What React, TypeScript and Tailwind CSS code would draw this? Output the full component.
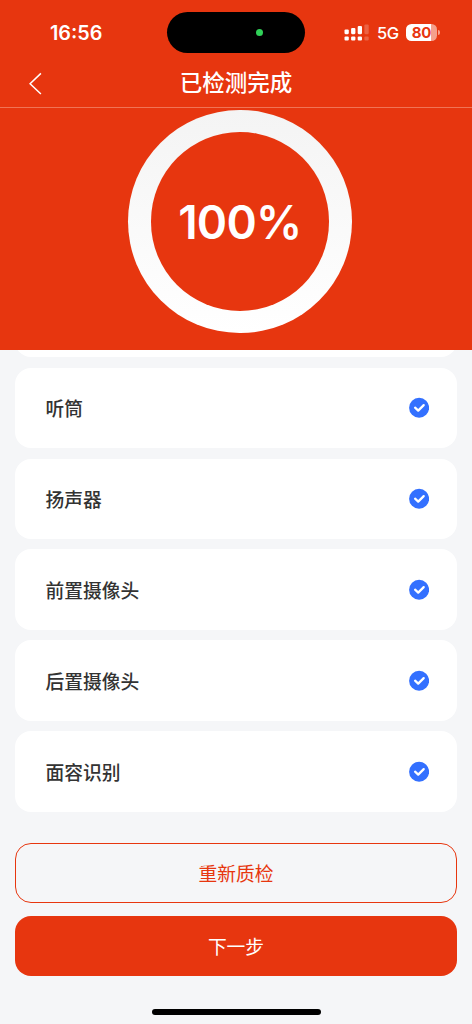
const checks = ["听筒", "扬声器", "前置摄像头", "后置摄像头", "面容识别"];

function CheckIcon() {
  return (
    <svg className="h-[21px] w-[20.6px] shrink-0" viewBox="0 0 21 21" fill="none">
      <circle cx="10.3" cy="10.8" r="10.2" fill="#3370ff" />
      <path d="M6.2 10.7 L9.4 13.7 L15 8.1" stroke="#fff" strokeWidth="2.3" strokeLinecap="round" strokeLinejoin="round" />
    </svg>
  );
}

function Signal() {
  return (
    <svg className="h-[18px] w-[25px]" viewBox="0 0 25 18">
      <g fill="#fff">
        <rect x="0.5" y="5.4" width="4.3" height="4.8" rx="1.1" />
        <rect x="7.1" y="4" width="4.3" height="6.2" rx="1.1" />
        <rect x="13.7" y="2" width="4.3" height="8.2" rx="1.1" />
        <rect x="0.5" y="12.4" width="4.3" height="4.2" rx="1.1" />
        <rect x="7.1" y="12.4" width="4.3" height="4.2" rx="1.1" />
        <rect x="13.7" y="12.4" width="4.3" height="4.2" rx="1.1" />
        <g opacity="0.22">
          <rect x="20.4" y="0.4" width="4.3" height="9.8" rx="1.1" />
          <rect x="20.4" y="12.4" width="4.3" height="4.2" rx="1.1" />
        </g>
      </g>
    </svg>
  );
}

function Battery() {
  return (
    <div className="flex items-center gap-px">
      <div className="flex h-[17px] w-[31px] items-center justify-center rounded-[5.5px] bg-[linear-gradient(90deg,#fff_80%,#f4a08c_80%)] text-[15px] font-bold leading-none tracking-[-0.2px] text-[#e7360f]">
        80
      </div>
      <div className="h-[5px] w-[2px] rounded-r-full bg-[#f4a08c]" />
    </div>
  );
}

export default function App() {
  return (
    <div className="flex h-[1024px] w-[472px] flex-col overflow-hidden bg-[#f5f6f8] font-['Inter','Noto_Sans_CJK_SC',sans-serif]">
      <header className="h-[107.8px] shrink-0 border-b border-[#f07456] bg-[#e7360f] text-white">
        <div className="flex h-[65px] items-center">
          <div className="w-[167px] pl-[50px] pt-[2px] text-[19.8px] font-semibold leading-none">16:56</div>
          <div className="flex h-[41px] w-[138px] items-center rounded-full bg-black pl-[89px]">
            <span className="size-[7px] rounded-full bg-[#30d158]" />
          </div>
          <div className="flex items-center pl-[39px]">
            <Signal />
            <span className="ml-[8px] w-[29px] pt-px text-[16.5px] font-medium leading-none tracking-[-0.5px]">5G</span>
            <Battery />
          </div>
        </div>
        <div className="grid h-[36px] grid-cols-[1fr_auto_1fr] items-center">
          <svg className="ml-[28px] h-[24px] w-[14px]" viewBox="0 0 14 24" fill="none" stroke="#fff" strokeWidth="1.5">
            <path d="M12.9 2.4 L2.1 12.7 L12.9 23" />
          </svg>
          <h1 className="text-[22.5px] font-medium leading-[36px]">已检测完成</h1>
        </div>
      </header>

      <section className="flex h-[242.5px] shrink-0 justify-center bg-[#e7360f] pl-[7.6px] pt-[2px]">
        <div className="grid size-[223.6px] place-items-center rounded-full bg-linear-to-b from-[#f4f4f4] to-white">
          <div className="grid size-[178.6px] place-items-center rounded-full bg-[#e7360f] text-[46px] font-semibold leading-none tracking-[-0.8px] text-white">
            100%
          </div>
        </div>
      </section>

      <main className="flex h-[461.3px] shrink-0 flex-col justify-end gap-[10.5px] overflow-hidden px-[15.3px]">
        <div className="h-[80.4px] shrink-0 rounded-[16px] bg-white" />
        {checks.map((name) => (
          <div key={name} className="flex h-[80.4px] shrink-0 items-center justify-between rounded-[16px] bg-white pl-[30.2px] pr-[27.5px]">
            <span className="pt-[6px] text-[18.75px] font-medium leading-none text-[#333]">{name}</span>
            <CheckIcon />
          </div>
        ))}
      </main>

      <footer className="flex flex-col px-[15.3px] pt-[31px]">
        <button className="h-[60px] rounded-[16px] border border-[#e7360f] pt-[5px] text-[18.75px] leading-none text-[#e7360f]">重新质检</button>
        <button className="mt-[13.2px] h-[60.2px] rounded-[16px] bg-[#e7360f] pt-[5px] text-[18.75px] leading-none text-white">下一步</button>
        <div className="mt-[33px] h-[6px] w-[169px] self-center rounded-full bg-black" />
      </footer>
    </div>
  );
}
